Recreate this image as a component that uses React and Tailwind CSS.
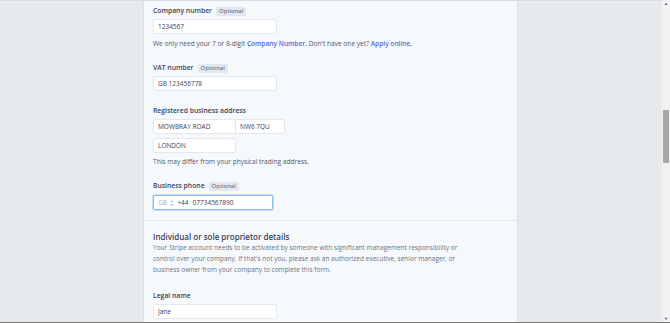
import React from 'react'

const font = { fontFamily: '"Open Sans", "Noto Sans", Arial, sans-serif' }

const Badge = () => (
    <span className="ml-[4px] inline-flex items-center h-[9px] px-[3px] rounded-[2px] bg-[#e3e8ee] text-[6px] font-normal text-[#4f566b]">Optional</span>
)

const Label = ({ children, optional, className = '' }) => (
    <div className={`flex items-center h-[9px] text-[6.8px] font-semibold text-[#3c4257] ${className}`}>
        {children}
        {optional && <Badge />}
    </div>
)

const Input = ({ value, className = '' }) => (
    <div className={`h-[15px] bg-white border border-[#e3e8ee] rounded-[2px] flex items-center px-[4px] text-[6.5px] text-[#3c4257] ${className}`}>
        {value}
    </div>
)

const App = () => {
    return (
        <div className="w-full h-[323px] bg-[#e6e9ee] flex overflow-hidden relative" style={font}>
            <div className="absolute top-0 left-0 right-0 h-px bg-[#d8dbe0]" />
            <div className="w-[143px] shrink-0" />

            {/* Panel */}
            <div className="w-[375px] shrink-0 bg-[#f6f9fc] border-l border-r border-[#dde2e8] pt-[7px]">
                <div className="px-[9px]">
                    <Label optional>Company number</Label>
                    <Input value="1234567" className="mt-[3px] w-[124px]" />
                    <p className="mt-[5px] leading-[9px] text-[6.6px] text-[#4f566b] whitespace-nowrap">
                        We only need your 7 or 8-digit <span className="text-[#5469d4] font-semibold">Company Number.</span> Don't have one yet? <span className="text-[#5469d4] font-semibold">Apply online.</span>
                    </p>

                    <Label optional className="mt-[16px]">VAT number</Label>
                    <Input value="GB 123456778" className="mt-[3px] w-[124px]" />

                    <Label className="mt-[16px]">Registered business address</Label>
                    <div className="mt-[3px] flex">
                        <Input value="MOWBRAY ROAD" className="w-[83px] rounded-r-none" />
                        <Input value="NW6 7QU" className="w-[50px] -ml-px rounded-l-none" />
                    </div>
                    <Input value="LONDON" className="mt-[4px] w-[83px]" />
                    <p className="mt-[4px] leading-[9px] text-[6.6px] text-[#4f566b]">This may differ from your physical trading address.</p>

                    <Label optional className="mt-[16px]">Business phone</Label>
                    <div className="mt-[4px] w-[120px] h-[15px] bg-white border border-[#8fbbe8] rounded-[2px] shadow-[0_0_0_1px_rgba(143,187,232,0.45)] flex items-center px-[4px] text-[6.5px] text-[#3c4257]">
                        <span className="text-[#a3acb9]">GB</span>
                        <span className="ml-[3px] flex flex-col leading-none text-[3.5px] text-[#a3acb9]">
                            <span>▲</span>
                            <span>▼</span>
                        </span>
                        <span className="ml-[4px]">+44</span>
                        <span className="ml-[4px]">07734567890</span>
                    </div>
                </div>

                <div className="mt-[10px] h-px bg-[#e3e8ee]" />

                <div className="px-[9px]">
                    <h3 className="mt-[11px] leading-[10px] text-[8px] font-semibold text-[#3c4257]">Individual or sole proprietor details</h3>
                    <p className="leading-[11px] text-[6.5px] text-[#697386] w-[316px]">
                        Your Stripe account needs to be activated by someone with significant management responsibility or control over your company. If that's not you, please ask an authorized executive, senior manager, or business owner from your company to complete this form.
                    </p>

                    <Label className="mt-[17px]">Legal name</Label>
                    <Input value="Jane" className="mt-[3px] w-[124px]" />
                </div>
            </div>

            <div className="flex-1" />

            {/* Scrollbar */}
            <div className="w-[8px] shrink-0 bg-[#f1f1f1] flex flex-col items-center justify-between py-[2px] relative">
                <span className="text-[4px] text-[#505050] leading-none">▲</span>
                <span className="text-[4px] text-[#505050] leading-none">▼</span>
                <div className="absolute left-[1px] right-[1px] top-[110px] h-[53px] bg-[#a8a8a8]" />
            </div>

            <div className="absolute bottom-0 left-0 right-0 h-px bg-[#7a7a7a]" />
        </div>
    )
}

export default App
